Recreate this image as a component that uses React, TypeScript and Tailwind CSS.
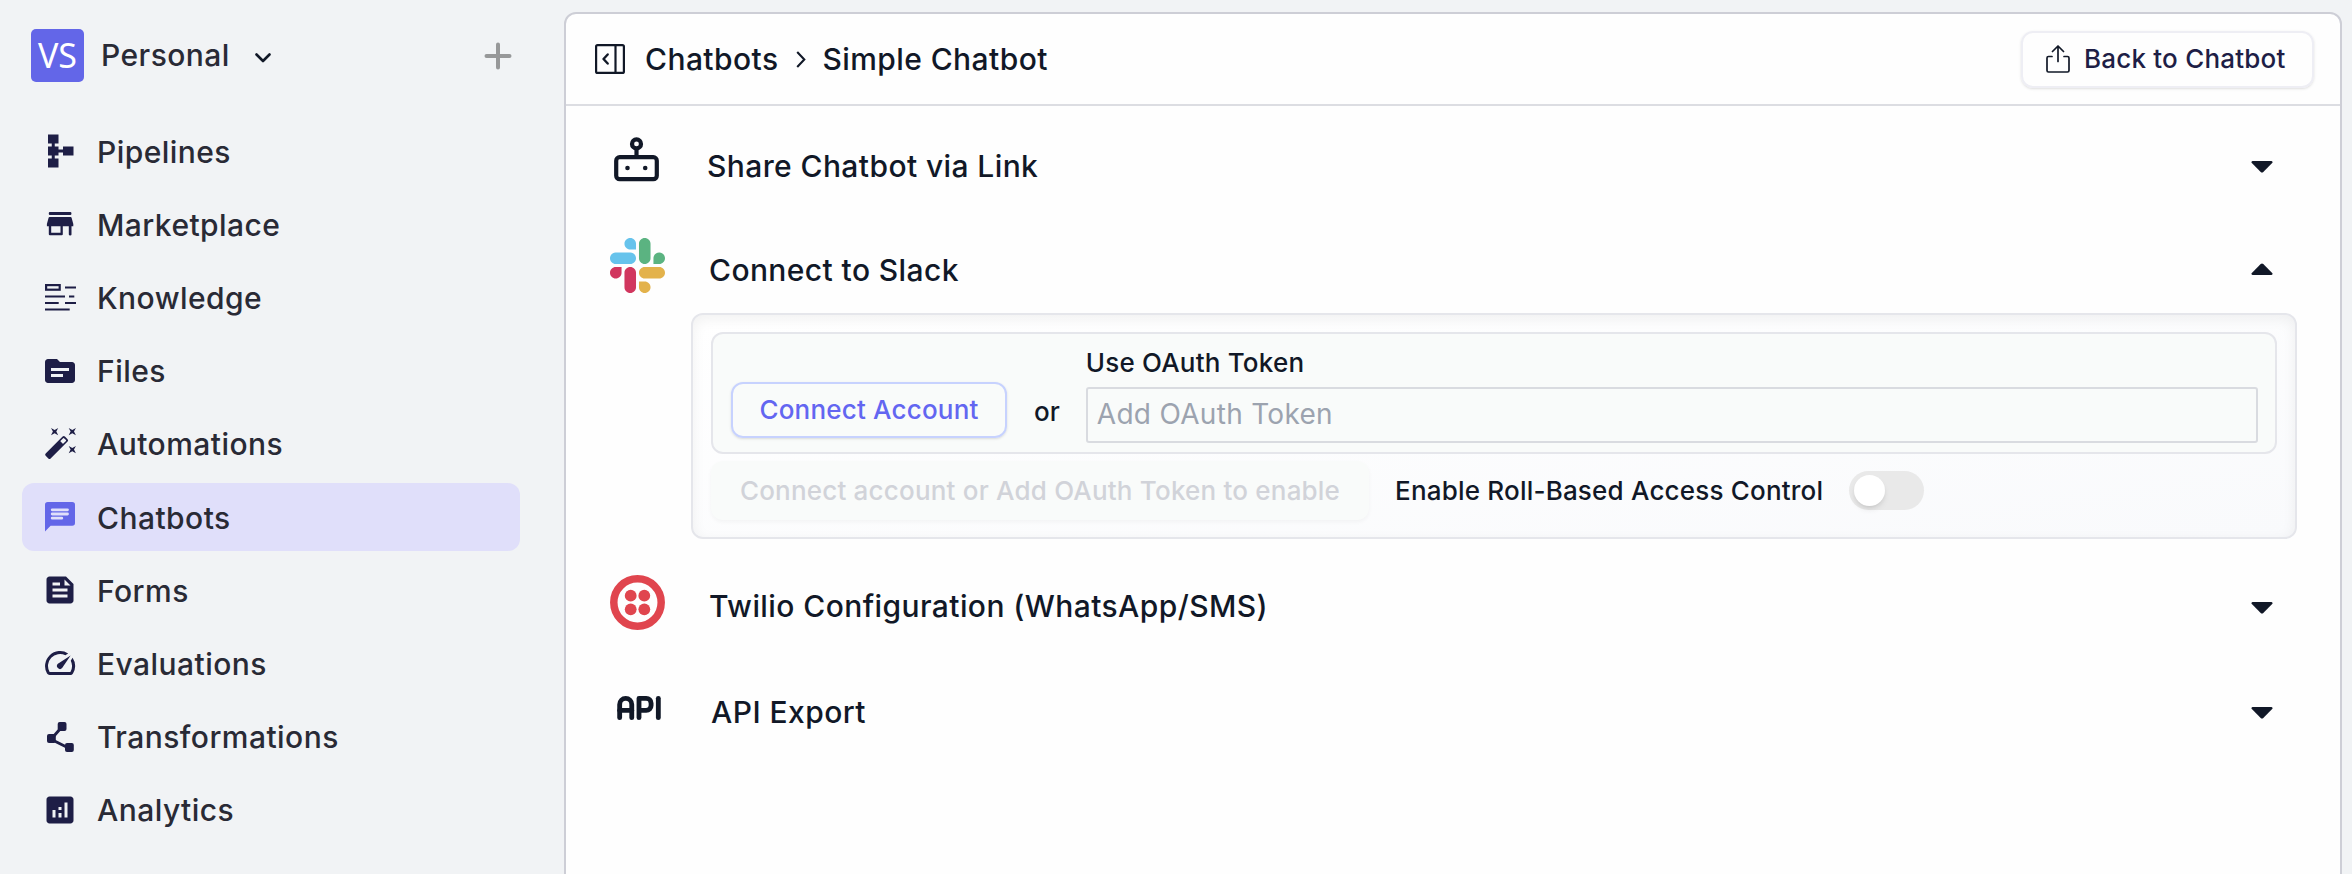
import { ReactNode } from "react";
import { MdSchema, MdTopic, MdFeed, MdSpeed, MdAnalytics } from "react-icons/md";
import { TbApi } from "react-icons/tb";

function StoreIcon() {
  return (
    <svg viewBox="0 0 32 32" className="size-8" fill="currentColor">
      <rect x="4.800" y="4" width="22.600" height="3" rx="1" />
      <path fillRule="evenodd" d="M5.600 9h21q.8 0 1 .8l1.700 6.200v2.300h-1.800v8.200q0 .9-1.300.9t-1.400-.9v-8.200h-6v7.900q0 1.100-1.100 1.100H5.900q-1.100 0-1.100-1.100v-7.900H2.900V16l1.700-6.200q.2-.8 1-.8zM7.200 18.300v6.400h9.300v-6.400z" />
    </svg>
  );
}

function KnowledgeIcon() {
  return (
    <svg viewBox="0 0 31 27" className="h-[27px] w-[31px]" fill="none" stroke="currentColor" strokeWidth="2">
      <rect x="1.100" y="1.100" width="13.600" height="4.600" strokeWidth="2.200" />
      <path d="M20 3.500h11M0 12.500h20M24 12.500h5.300M0 19h13.700M20 19h11M0 25.500h24.700" />
    </svg>
  );
}

function WandIcon() {
  return (
    <svg viewBox="0 0 31 31" className="size-[31px] overflow-visible">
      <g transform="rotate(-45 11.700 19.400)" fill="currentColor">
        <rect x="-2" y="15.900" width="27.200" height="7" rx="1.600" />
        <rect x="18.600" y="17.400" width="4.800" height="4" rx="0.600" fill="#f1f3f5" />
      </g>
      <path
        d="m6 0 3.600 1.900L13.200 0l-1.900 3.600 1.900 3.600-3.600-1.900L6 7.200l1.900-3.600zM23.700 0l3.600 1.900L30.900 0 29 3.600l1.900 3.600-3.600-1.900-3.600 1.900 1.900-3.600zM23.700 18l3.600 1.900 3.600-1.900-1.900 3.600 1.900 3.600-3.600-1.900-3.600 1.900 1.900-3.600z"
        fill="currentColor"
      />
    </svg>
  );
}

function ChatIcon() {
  return (
    <svg viewBox="0 0 30 30" className="size-[30px]">
      <path d="M2.800 0h24.400Q30 0 30 2.800v18.200q0 2.800-2.800 2.800H5.600L0 29.500V2.800Q0 0 2.800 0z" fill="currentColor" />
      <path d="M7.200 7.800h15.300M7.200 12h15.300M7.200 16.200h9.600" stroke="#e0dffa" strokeWidth="2.800" strokeLinecap="round" />
    </svg>
  );
}

function NodesIcon() {
  return (
    <svg viewBox="0 0 27 30" className="h-[30px] w-[27px]" fill="currentColor">
      <rect x="10.700" y="0" width="8.800" height="9" rx="2" />
      <rect x="0" y="12" width="8.800" height="9" rx="2" />
      <rect x="18" y="21" width="8.800" height="9" rx="2" />
      <path d="M13.500 6.500 6.500 14.500M6.500 18.500 20.500 25.500" fill="none" stroke="currentColor" strokeWidth="2.900" />
    </svg>
  );
}

function RobotIcon() {
  return (
    <svg viewBox="0 0 45 45" className="size-[45px]" fill="none" stroke="#111827" strokeWidth="4.200">
      <rect x="2.200" y="20.200" width="40.600" height="22" rx="3.500" />
      <circle cx="22.500" cy="6.900" r="4.500" />
      <path d="M22.500 11v9" />
      <circle cx="13.500" cy="31" r="2.300" fill="#111827" stroke="none" />
      <circle cx="31.200" cy="31" r="2.300" fill="#111827" stroke="none" />
    </svg>
  );
}

function SlackIcon() {
  return (
    <svg viewBox="0 0 122.800 122.800" className="size-[55px]">
      <path d="M25.800 77.600c0 7.100-5.800 12.900-12.900 12.900S0 84.700 0 77.600s5.800-12.900 12.900-12.900h12.900v12.900zm6.500 0c0-7.100 5.800-12.900 12.900-12.900s12.900 5.800 12.900 12.900v32.300c0 7.100-5.800 12.900-12.900 12.900s-12.900-5.800-12.900-12.900V77.600z" fill="#d1365e" />
      <path d="M45.200 25.800c-7.100 0-12.900-5.800-12.900-12.900S38.100 0 45.200 0s12.900 5.800 12.900 12.900v12.900H45.200zm0 6.500c7.100 0 12.900 5.800 12.900 12.900s-5.800 12.900-12.900 12.900H12.900C5.800 58.100 0 52.300 0 45.200s5.800-12.900 12.900-12.900h32.300z" fill="#66c3ec" />
      <path d="M97 45.200c0-7.100 5.800-12.900 12.900-12.900s12.900 5.800 12.900 12.900-5.800 12.900-12.900 12.900H97V45.200zm-6.500 0c0 7.100-5.800 12.900-12.900 12.900s-12.900-5.800-12.900-12.900V12.900C64.700 5.800 70.500 0 77.600 0s12.900 5.800 12.900 12.900v32.300z" fill="#5bb381" />
      <path d="M77.600 97c7.100 0 12.900 5.800 12.900 12.900s-5.800 12.900-12.900 12.900-12.900-5.800-12.900-12.900V97h12.900zm0-6.500c-7.100 0-12.900-5.800-12.900-12.900s5.800-12.900 12.900-12.900h32.300c7.100 0 12.900 5.800 12.900 12.900s-5.800 12.900-12.900 12.900H77.600z" fill="#e3b24b" />
    </svg>
  );
}

function TwilioIcon() {
  return (
    <svg viewBox="0 0 55 55" className="size-[55px]" fill="#e0454e">
      <circle cx="27.500" cy="27.500" r="23.700" fill="none" stroke="#e0454e" strokeWidth="7.500" />
      <circle cx="20.700" cy="20.700" r="5.900" />
      <circle cx="34.300" cy="20.700" r="5.900" />
      <circle cx="20.700" cy="34.300" r="5.900" />
      <circle cx="34.300" cy="34.300" r="5.900" />
    </svg>
  );
}

function Caret({ up = false }: { up?: boolean }) {
  return (
    <svg viewBox="0 0 22 12" className={up ? "h-3 w-[22px] rotate-180" : "h-3 w-[22px]"} fill="#111827">
      <path d="M1.500 0h19Q22 .6 21.400 1.800L12.300 11q-1.300 1.200-2.600 0L.6 1.800Q0 .6 1.500 0z" />
    </svg>
  );
}

const navItems: { label: string; icon: ReactNode; active?: boolean }[] = [
  { label: "Pipelines", icon: <MdSchema className="size-9" /> },
  { label: "Marketplace", icon: <StoreIcon /> },
  { label: "Knowledge", icon: <KnowledgeIcon /> },
  { label: "Files", icon: <MdTopic className="size-9" /> },
  { label: "Automations", icon: <WandIcon /> },
  { label: "Chatbots", icon: <ChatIcon />, active: true },
  { label: "Forms", icon: <MdFeed className="size-9" /> },
  { label: "Evaluations", icon: <MdSpeed className="size-9" /> },
  { label: "Transformations", icon: <NodesIcon /> },
  { label: "Analytics", icon: <MdAnalytics className="size-9" /> },
];

function Sidebar() {
  return (
    <aside className="flex w-[564px] shrink-0 flex-col pl-[22px]">
      <div className="mt-7 flex h-[55px] items-center pl-[9px]">
        <div className="flex h-[53px] w-[53px] items-center justify-center rounded-[5px] bg-[#6366e8] font-['Noto_Sans',sans-serif] text-[34px] text-white">
          VS
        </div>
        <span className="ml-[17px] text-[30px] font-medium tracking-[0.45px] text-[#292a35]">Personal</span>
        <svg viewBox="0 0 16 10" className="ml-[25px] mt-1 h-[10px] w-4" fill="none" stroke="#111827" strokeWidth="2.600" strokeLinecap="round" strokeLinejoin="round">
          <path d="m1.500 1.500 6.500 6.500 6.500-6.500" />
        </svg>
        <svg viewBox="0 0 28 28" className="ml-[213px] mt-px size-7" stroke="#979899" strokeWidth="4" strokeLinecap="round">
          <path d="M14 2.500v23M2.500 14h23" />
        </svg>
      </div>
      <nav className="mt-[34px] flex flex-col gap-[5px]">
        {navItems.map((item) => (
          <a
            key={item.label}
            className={
              item.active
                ? "flex h-[68.200px] w-[498px] items-center rounded-xl bg-[#e0dffa] pl-5 text-[#6366e8]"
                : "flex h-[68.200px] w-[498px] items-center pl-5 text-[#1e1e46]"
            }
          >
            <span className="flex w-9 justify-center">{item.icon}</span>
            <span className="ml-[19px] pt-[2px] text-[30px] font-medium tracking-[0.45px] text-[#292a35]">{item.label}</span>
          </a>
        ))}
      </nav>
    </aside>
  );
}

function Header() {
  return (
    <header className="flex h-[92px] items-center border-b-2 border-[#dcdde2] pl-[29px] pr-[26px]">
      <svg viewBox="0 0 30 30" className="size-[30px]" fill="none" stroke="#111827" strokeWidth="2.200">
        <rect x="1.100" y="1.100" width="27.800" height="27.800" rx="1.500" />
        <path d="M20.500 1v28" />
        <path d="M12.700 10.500 8.500 15l4.200 4.500" strokeWidth="2.400" strokeLinecap="round" strokeLinejoin="round" />
      </svg>
      <span className="ml-[20px] text-[30px] font-medium tracking-[0.42px]">Chatbots</span>
      <svg viewBox="0 0 10 18" className="ml-[18px] h-[17px] w-[10px]" fill="none" stroke="#111827" strokeWidth="2.200">
        <path d="m1 1 7.500 8L1 17" />
      </svg>
      <span className="ml-[16px] text-[30px] font-medium tracking-[0.42px]">Simple Chatbot</span>
      <button className="ml-auto flex h-[57px] w-[293px] items-center rounded-xl border-2 border-[#eeeef4] pb-px pl-[23px] text-[26px] font-medium tracking-[0.2px] text-[#1e1e46] shadow-sm">
        <svg viewBox="0 0 24 28" className="mr-[14px] h-7 w-6" fill="none" stroke="#111827" strokeWidth="1.700" strokeLinecap="round" strokeLinejoin="round">
          <path d="M6 11.500H2.500q-1.500 0-1.500 1.500v12.500Q1 27 2.500 27h19q1.500 0 1.500-1.500V13q0-1.500-1.500-1.500H18M12 16.500V1.500M6.500 6.500 12 1l5.500 5.500" />
        </svg>
        Back to Chatbot
      </button>
    </header>
  );
}

interface SectionProps {
  icon: ReactNode;
  title: string;
  open?: boolean;
  className: string;
  titleClassName: string;
  caretClassName: string;
}

function Section({ icon, title, open = false, className, titleClassName, caretClassName }: SectionProps) {
  return (
    <div className={className}>
      <div className="flex w-[55px] justify-center pb-[6px]">{icon}</div>
      <h2 className={titleClassName}>{title}</h2>
      <div className={caretClassName}>
        <Caret up={open} />
      </div>
    </div>
  );
}

function SlackPanel() {
  return (
    <div className="ml-[125px] mr-[43px] h-[226px] rounded-xl border-2 border-[#e5e6eb] bg-linear-to-br from-white to-[#f9fafc] pl-[18px] pr-[18px] pt-[17px] shadow-[inset_0_4px_14px_rgba(0,0,0,0.06)]">
      <div className="flex h-[122px] rounded-xl border-2 border-[#e5e6eb] bg-[#f9fbfa] pl-[18px] pr-[17px]">
        <button className="mt-[48px] h-[56px] w-[276px] rounded-xl border-2 border-[#c7d2fe] pb-[2px] text-[26px] font-medium tracking-[0.2px] text-[#6366f1] shadow-sm">
          Connect Account
        </button>
        <span className="ml-[27px] mt-[58px] text-[26px] font-medium">or</span>
        <div className="ml-[26px] flex flex-1 flex-col">
          <label className="mt-[9px] text-[26px] font-medium leading-[40px] tracking-[0.2px]">Use OAuth Token</label>
          <input
            className="mt-[4px] h-[56px] rounded-[3px] border-2 border-[#d9dbe0] bg-transparent px-[9px] pb-[2px] text-[28px] tracking-[0.3px] placeholder:text-[#9ca3af]"
            placeholder="Add OAuth Token"
          />
        </div>
      </div>
      <div className="mt-[7px] flex items-center">
        <button className="h-[59px] w-[658px] rounded-xl bg-[#f9fbfa] text-[26px] font-medium tracking-[0.2px] text-[#d1d3d9] shadow-[0_2px_4px_rgba(0,0,0,0.04)]">
          Connect account or Add OAuth Token to enable
        </button>
        <span className="ml-[26px] text-[26px] font-medium tracking-[0.2px]">Enable Roll-Based Access Control</span>
        <div className="ml-[26px] flex h-[39px] w-[75px] items-center rounded-full bg-[#e9e9e9] pl-[5px]">
          <div className="size-[31px] rounded-full bg-white shadow-md" />
        </div>
      </div>
    </div>
  );
}

export default function App() {
  return (
    <div className="flex h-[874px] w-[2352px] overflow-hidden bg-[#f1f3f5] font-['Inter',sans-serif] text-[#111827]">
      <Sidebar />
      <main className="mt-3 h-[880px] w-[1778px] rounded-t-xl border-2 border-[#cdced6] bg-[#fefefe]">
        <Header />
        <Section
          icon={<div className="pb-[8px]"><RobotIcon /></div>}
          title="Share Chatbot via Link"
          className="mt-[31px] flex h-[58px] items-center gap-[43px] pl-[43px] pr-[67px]"
          titleClassName="flex-1 text-[30px] font-medium tracking-[0.4px]"
          caretClassName="pt-[2px]"
        />
        <Section
          icon={<SlackIcon />}
          title="Connect to Slack"
          open
          className="mt-[43px] flex h-[60px] items-center gap-[44px] pl-[44px] pr-[67px]"
          titleClassName="flex-1 pt-[4px] text-[30px] font-medium tracking-[0.4px]"
          caretClassName="pt-[2px]"
        />
        <div className="mt-[15px]">
          <SlackPanel />
        </div>
        <Section
          icon={<TwilioIcon />}
          title="Twilio Configuration (WhatsApp/SMS)"
          className="mt-[36px] flex h-[60px] items-center gap-[44px] pl-[44px] pr-[67px]"
          titleClassName="flex-1 pt-[2px] text-[30px] font-medium tracking-[0.41px]"
          caretClassName="pt-[5px]"
        />
        <Section
          icon={<TbApi className="size-[58px] shrink-0" />}
          title="API Export"
          className="mt-[46px] flex h-[60px] items-center gap-[45px] pl-[45px] pr-[67px]"
          titleClassName="flex-1 pt-[2px] text-[30px] font-medium tracking-[0.45px]"
          caretClassName="pt-[4px]"
        />
      </main>
    </div>
  );
}
